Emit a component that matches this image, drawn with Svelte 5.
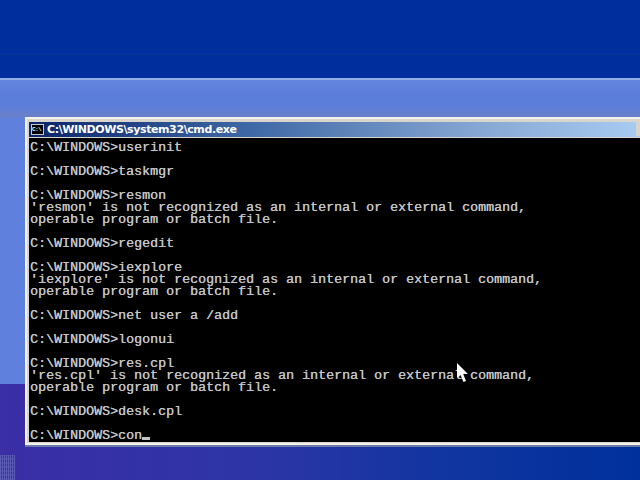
<script>
  const lines = [
    "C:\\WINDOWS>userinit",
    "",
    "C:\\WINDOWS>taskmgr",
    "",
    "C:\\WINDOWS>resmon",
    "'resmon' is not recognized as an internal or external command,",
    "operable program or batch file.",
    "",
    "C:\\WINDOWS>regedit",
    "",
    "C:\\WINDOWS>iexplore",
    "'iexplore' is not recognized as an internal or external command,",
    "operable program or batch file.",
    "",
    "C:\\WINDOWS>net user a /add",
    "",
    "C:\\WINDOWS>logonui",
    "",
    "C:\\WINDOWS>res.cpl",
    "'res.cpl' is not recognized as an internal or external command,",
    "operable program or batch file.",
    "",
    "C:\\WINDOWS>desk.cpl",
    "",
  ];
</script>

<div class="desktop">
  <div class="top"></div>
  <div class="middle"></div>
  <div class="bottom"><div class="dots"></div></div>

  <section class="window">
    <header class="titlebar">
      <span class="icon">C:\</span>
      <span class="title">C:\WINDOWS\system32\cmd.exe</span>
      <span class="btn"></span>
    </header>
    <div class="console">
      {#each lines as line}
        <div class="line">{line}</div>
      {/each}
      <div class="line">C:\WINDOWS&gt;con<span class="caret"></span></div>
    </div>
  </section>

  <svg class="cursor" width="14" height="22" viewBox="0 0 14 22">
    <path d="M1 0 L1 15 L4.5 12 L7.5 19 L10 18 L7.2 11 L12 11 Z" fill="#fff" />
  </svg>
</div>

<style>
  :global(body) { margin: 0; background: #002e9c; }
  .desktop {
    position: relative;
    width: 640px;
    height: 480px;
    overflow: hidden;
    display: flex;
    flex-direction: column;
  }
  .top {
    height: 78px;
    box-sizing: border-box;
    background: linear-gradient(#002e9c 0 53px, #0633a4 53px 54px, #032f94 54px 55px, #002e9c 57px);
  }
  .middle {
    height: 306px;
    box-sizing: border-box;
    border-top: 2px solid #93aeea;
    background: linear-gradient(#6486de 0, #5c7edb 14px, #5c7edb 26px, #6a80c8 37px, #5f80dc 38px);
  }
  .bottom {
    flex: 1;
    position: relative;
    background: linear-gradient(90deg, #3b2ea6 0%, #2d35a6 40%, #1035a0 70%, #00309c 100%);
  }
  .dots {
    position: absolute;
    left: 0;
    top: 71px;
    width: 15px;
    height: 25px;
    opacity: 0.4;
    background-image: repeating-linear-gradient(90deg, #8f9fd0 0 1px, transparent 1px 2px),
      repeating-linear-gradient(0deg, #5b6bc0 0 2px, transparent 2px 4px);
  }
  .window {
    position: absolute;
    left: 25px;
    top: 117px;
    width: 640px;
    height: 328px;
    box-sizing: border-box;
    background: #d8d6cc;
    border-top: 2px solid #f4f2ea;
    border-left: 2px solid #f4f2ea;
    border-bottom: 2px solid #f4f2ea;
    padding: 3px 0 1px 2px;
    box-shadow: 0 2px 0 #6c7ba8;
    display: flex;
    flex-direction: column;
  }
  .titlebar {
    height: 15px;
    flex: none;
    display: flex;
    align-items: center;
    gap: 3px;
    background: linear-gradient(90deg, #0a246a, #3f69a6 35%, #85a6d2 70%, #a6caf0 95%);
    color: #fff;
    font: 700 11px/15px Tahoma, "DejaVu Sans", "Liberation Sans", sans-serif;
    letter-spacing: -0.4px;
    padding-left: 2px;
    box-sizing: border-box;
  }
  .icon {
    width: 13px;
    height: 11px;
    flex: none;
    background: #000;
    border: 1px solid #c8c8c8;
    box-sizing: border-box;
    color: #fff;
    font: 700 6px/9px "Liberation Mono", monospace;
    letter-spacing: -0.6px;
    overflow: hidden;
  }
  .title { flex: none; }
  .btn {
    position: absolute;
    left: 609px;
    top: 3px;
    width: 12px;
    height: 14px;
    background: #d8d6cc;
  }
  .console {
    flex: 1;
    margin-top: 1px;
    background: #000;
    color: #c4c4c4;
    padding: 4px 0 0 1px;
    font: 13.33px/12px "Liberation Mono", monospace;
    text-shadow: 0.3px 0 0 #c4c4c4;
  }
  .line {
    height: 12px;
    white-space: pre;
  }
  .caret {
    display: inline-block;
    width: 8px;
    height: 3px;
    background: #c4c4c4;
    vertical-align: -1px;
  }
  .cursor {
    position: absolute;
    left: 456px;
    top: 363px;
  }
</style>
